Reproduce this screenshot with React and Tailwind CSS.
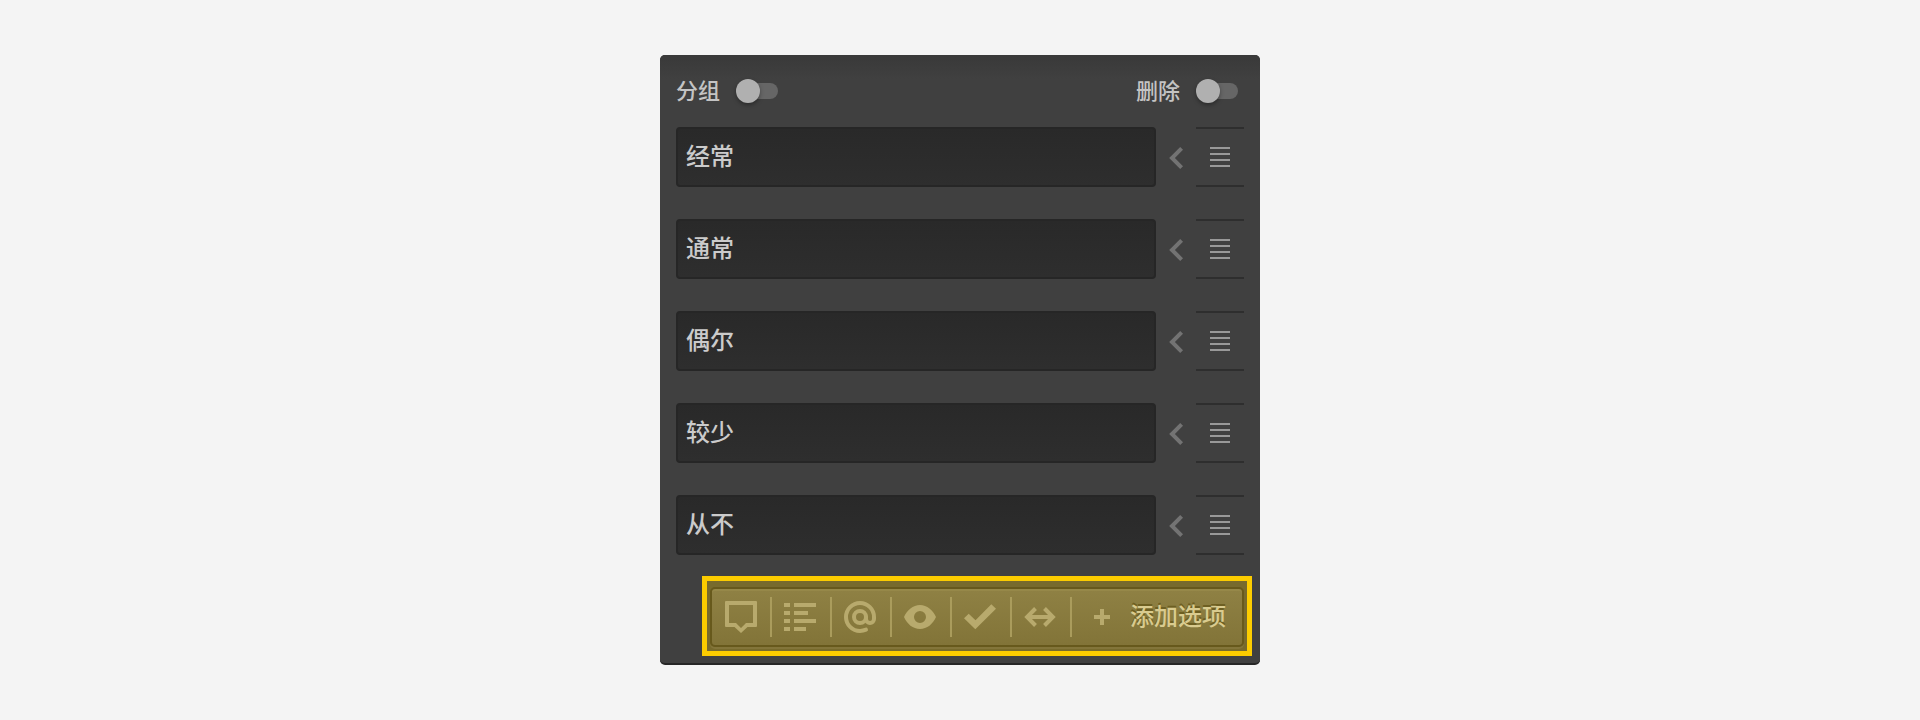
const options = ["经常", "通常", "偶尔", "较少", "从不"];

function Toggle() {
  return (
    <span className="flex h-4 w-10 items-center rounded-full bg-[#666666]">
      <span className="-ml-0.5 size-6 shrink-0 rounded-full bg-[#b0b0b0] shadow-[0_2px_4px_rgba(0,0,0,0.35)]" />
    </span>
  );
}

function Row({ label }) {
  return (
    <div className="flex h-[60px] items-center">
      <div className="flex h-full w-[480px] items-center rounded-[4px] border-2 border-[#262626] bg-linear-to-b from-[#292929] to-[#2e2e2e] pl-2 text-2xl font-medium text-[#cbcbcb]">
        <span className="-mt-1">{label}</span>
      </div>
      <svg className="ml-3 h-6 w-4" viewBox="0 0 16 24" fill="none" stroke="#737373" strokeWidth="4">
        <path d="M13.6 3.4 4 13l9.6 9.6" />
      </svg>
      <div className="ml-3 flex h-full w-12 items-center justify-center border-y-2 border-[#2e2e2e]">
        <div className="flex w-5 flex-col gap-1">
          <span className="h-0.5 bg-[#999999]" />
          <span className="h-0.5 bg-[#999999]" />
          <span className="h-0.5 bg-[#999999]" />
          <span className="h-0.5 bg-[#999999]" />
        </div>
      </div>
    </div>
  );
}

const icons = [
  <path key="comment" fillRule="evenodd" d="M2 0h30q1 0 1 1v24q0 1-1 1h-8.500L17 32l-6.500-6H2q-1 0-1-1V1q0-1 1-1zM5 4v18h7l5 5 5-5h7V4z" />,
  <path key="list" d="M0 2h6v4H0zM10 2h22v4H10zM0 10h6v4H0zM10 10h14v4H10zM0 18h6v4H0zM10 18h22v4H10zM0 26h6v4H0zM10 26h12v4H10z" />,
  <g key="at" fill="none" stroke="#b8aa6d" strokeWidth="4" strokeLinecap="round">
    <circle cx="16" cy="16" r="6" />
    <path d="M22 16v2a4 4 0 0 0 8 0V16A14 14 0 1 0 16 30c2.200 0 4.200-.5 6-1.300" />
  </g>,
  <path key="eye" fillRule="evenodd" d="M0 16C3 9 9 4 16 4s13 5 16 12c-3 7-9 12-16 12S3 23 0 16zm16-6a6 6 0 1 0 0 12 6 6 0 0 0 0-12z" />,
  <path key="check" d="M0 17.300 4.700 12.700l6.800 6.600L27.300 3.300 32 7.700 11.300 28.300z" />,
  <g key="arrows" fill="none" stroke="#b8aa6d" strokeWidth="4">
    <path d="M4 16h24M11.500 7.500 3.100 16l8.400 8.500M20.500 7.500l8.400 8.500-8.400 8.500" />
  </g>,
];

export default function App() {
  return (
    <main className="flex h-[720px] w-full justify-center bg-[#f4f4f4] pt-[55px] font-['Noto_Sans_CJK_SC',sans-serif]">
      <section className="h-[610px] w-[600px] rounded-[5px] border-b-2 border-[#262626] bg-[#404040] bg-[linear-gradient(#393939,#404040_24px)] px-4">
        <header className="flex h-[72px] items-center justify-between text-[22px] font-medium text-[#c4c4c4]">
          <div className="flex items-center gap-[18px]">
            <span className="-mt-1">分组</span>
            <Toggle />
          </div>
          <div className="mr-1.5 flex items-center gap-[18px]">
            <span className="-mt-1">删除</span>
            <Toggle />
          </div>
        </header>
        <div className="flex flex-col gap-8">
          {options.map((label) => (
            <Row key={label} label={label} />
          ))}
        </div>
        <div className="mt-[21px] ml-[26px] h-20 w-[550px] border-[5px] border-[#fccc00] bg-[#776a2d] px-[3px] pt-1.5">
          <div className="flex h-[60px] items-center rounded-[5px] border-2 border-[#67591c] bg-linear-to-b from-[#8f8144] to-[#827438] pl-3 shadow-[0_2px_0_#83753a,inset_0_2px_0_#968849]">
            {icons.map((icon) => (
              <div key={icon.key} className="mr-3 flex h-10 w-12 shrink-0 items-center border-r-2 border-[#aa9c5c]">
                <svg className="size-8 overflow-visible" viewBox="0 0 32 32" fill="#b8aa6d">
                  {icon}
                </svg>
              </div>
            ))}
            <svg className="ml-2.5 size-4 shrink-0" viewBox="0 0 16 16" fill="#b8aa6d">
              <path d="M6 0h4v6h6v4h-6v6H6v-6H0V6h6z" />
            </svg>
            <span className="-mt-1 ml-5 text-2xl font-medium whitespace-nowrap text-[#d9cb8f] [text-shadow:0_-2px_0_#6d5f22]">添加选项</span>
          </div>
        </div>
      </section>
    </main>
  );
}
